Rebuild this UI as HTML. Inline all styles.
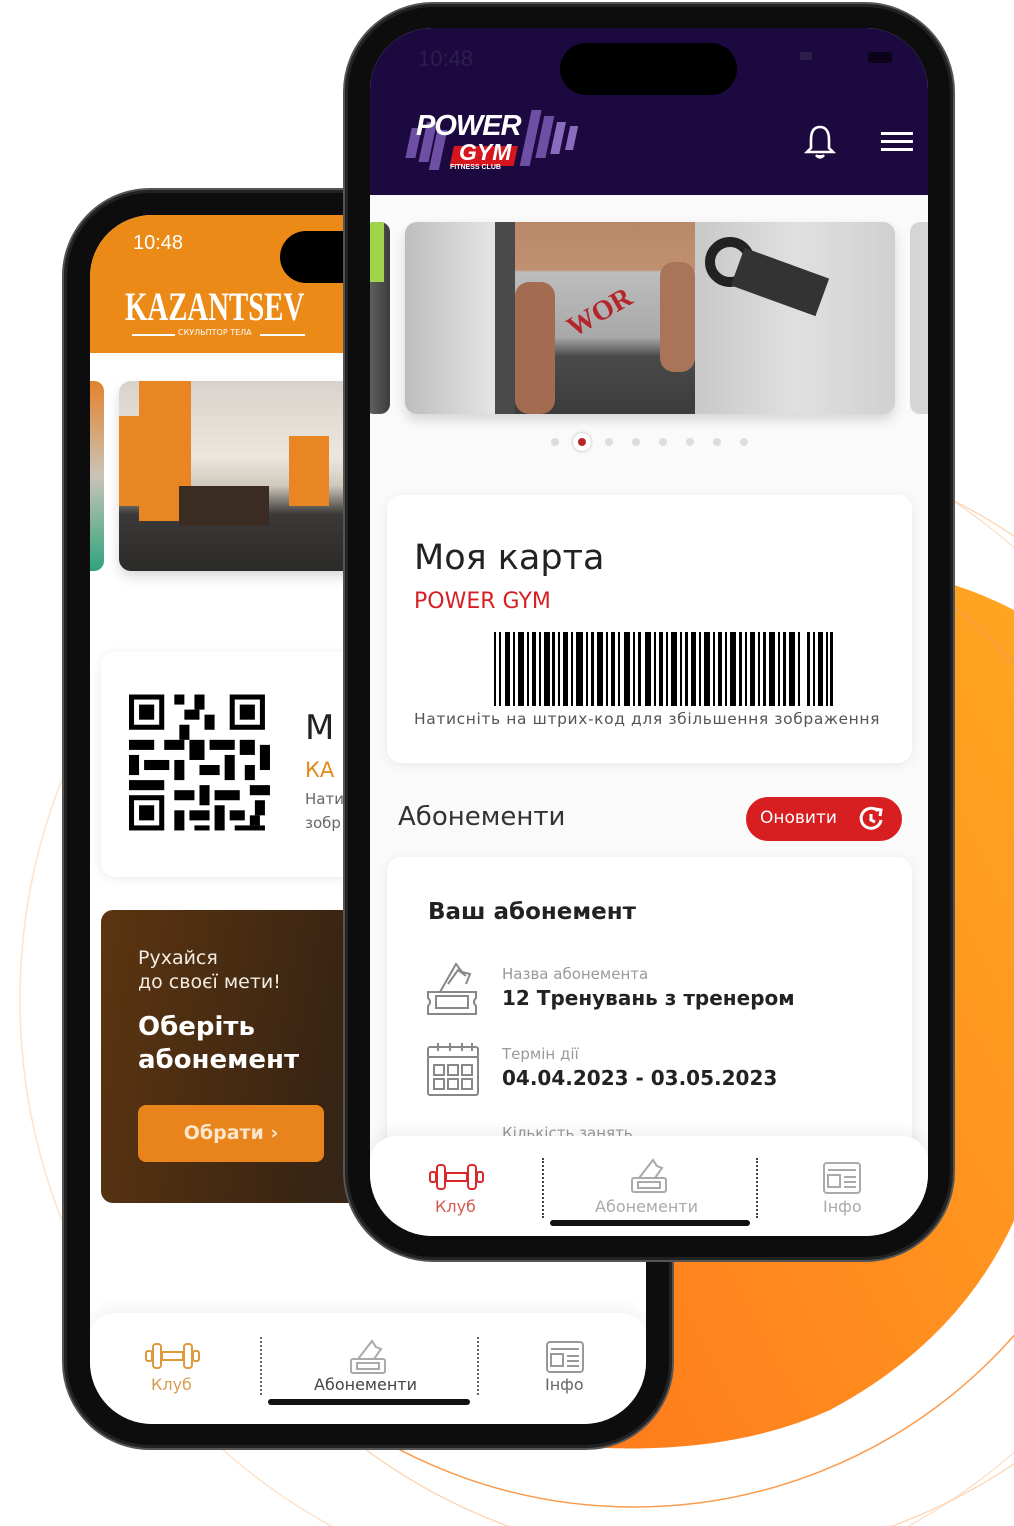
<!DOCTYPE html>
<html><head><meta charset="utf-8">
<style>
*{margin:0;padding:0;box-sizing:border-box}
html,body{width:1014px;height:1526px;overflow:hidden}
body{background:#fff;position:relative;font-family:"DejaVu Sans","Liberation Sans",sans-serif}
.abs{position:absolute}
.t{position:absolute;white-space:nowrap}
</style></head><body>

<svg class="abs" style="left:0;top:0" width="1014" height="1526">
<defs><linearGradient id="og" x1="0" y1="1" x2="1" y2="0"><stop offset="0" stop-color="#ff7a1c"/><stop offset="1" stop-color="#ffa722"/></linearGradient></defs>
<path d="M700 580 Q880 540 1014 610 L1030 610 L1030 1180 Q980 1330 830 1410 Q720 1460 560 1445 L560 580 Z" fill="url(#og)"/>
<circle cx="620" cy="1000" r="600" fill="none" stroke="#fde2cc" stroke-width="1.5"/>
<circle cx="634" cy="1000" r="507" fill="none" stroke="#fb9a4a" stroke-width="1.5"/>
<circle cx="700" cy="1000" r="560" fill="none" stroke="#fdd0a8" stroke-width="1.2"/>
</svg>

<!-- BACK PHONE -->
<div class="abs" style="left:62px;top:188px;width:612px;height:1262px;border-radius:88px;background:#0d0d0d;border:2px solid #555;box-shadow:inset 0 0 0 3px #222"></div>
<div class="abs" style="left:90px;top:215px;width:556px;height:1209px;border-radius:62px;background:#fff;overflow:hidden">
  <div class="abs" style="left:0;top:0;width:556px;height:138px;background:#ec8a17"></div>
  <div class="t" style="left:43px;top:17px;color:#fff;font-size:20px;font-family:'Liberation Sans',sans-serif">10:48</div>
  <div class="abs" style="left:190px;top:16px;width:180px;height:52px;border-radius:26px;background:#000"></div>
  <div class="t" style="left:35px;top:68px;color:#fff;font-size:40px;font-weight:bold;font-family:'Liberation Serif',serif;transform:scaleX(0.72);transform-origin:left">KAZANTSEV</div>
  <div class="abs" style="left:42px;top:119px;width:43px;height:2px;background:#fff"></div>
  <div class="t" style="left:88px;top:113px;color:#fff;font-size:8px">СКУЛЬПТОР ТЕЛА</div>
  <div class="abs" style="left:170px;top:119px;width:45px;height:2px;background:#fff"></div>
  <div class="abs" style="left:-10px;top:166px;width:24px;height:190px;border-radius:10px;background:linear-gradient(#e4822c,#c9c4b8 50%,#2ea37b)"></div>
  <div class="abs" style="left:29px;top:166px;width:300px;height:190px;border-radius:12px;overflow:hidden;background:linear-gradient(#d7d2cb 0%,#ece7de 40%,#cfc8bc 55%,#3c3a38 70%,#2b2a29 100%);box-shadow:0 6px 12px rgba(0,0,0,.15)">
    <div class="abs" style="left:20px;top:0;width:52px;height:140px;background:#e98624"></div>
    <div class="abs" style="left:170px;top:55px;width:40px;height:70px;background:#e98624"></div>
    <div class="abs" style="left:0;top:35px;width:30px;height:90px;background:#e98624"></div>
    <div class="abs" style="left:60px;top:105px;width:90px;height:40px;background:#3a2c22"></div>
  </div>
  <div class="abs" style="left:11px;top:437px;width:560px;height:225px;border-radius:14px;background:#fff;box-shadow:0 2px 12px rgba(0,0,0,.08)"></div>
  <svg class="abs" style="left:39px;top:479px" width="146" height="142" viewBox="0 0 29 28">
    <g fill="#000">
      <rect x="0" y="0" width="7" height="7"/><rect x="1" y="1" width="5" height="5" fill="#fff"/><rect x="2" y="2" width="3" height="3"/>
      <rect x="20" y="0" width="7" height="7"/><rect x="21" y="1" width="5" height="5" fill="#fff"/><rect x="22" y="2" width="3" height="3"/>
      <rect x="0" y="20" width="7" height="7"/><rect x="1" y="21" width="5" height="5" fill="#fff"/><rect x="2" y="22" width="3" height="3"/>
      <rect x="9" y="0" width="2" height="2"/><rect x="13" y="0" width="2" height="3"/><rect x="11" y="3" width="3" height="2"/><rect x="15" y="4" width="2" height="3"/><rect x="10" y="6" width="2" height="3"/>
      <rect x="0" y="9" width="5" height="2"/><rect x="0" y="12" width="2" height="4"/><rect x="3" y="13" width="5" height="2"/><rect x="7" y="9" width="4" height="2"/><rect x="12" y="9" width="3" height="4"/><rect x="16" y="9" width="5" height="2"/><rect x="22" y="9" width="3" height="3"/><rect x="26" y="10" width="2" height="5"/>
      <rect x="9" y="13" width="2" height="4"/><rect x="14" y="14" width="4" height="2"/><rect x="19" y="12" width="2" height="5"/><rect x="23" y="14" width="2" height="3"/><rect x="0" y="17" width="7" height="2"/>
      <rect x="9" y="19" width="4" height="2"/><rect x="14" y="18" width="2" height="4"/><rect x="17" y="19" width="5" height="2"/><rect x="24" y="18" width="4" height="2"/><rect x="9" y="23" width="2" height="4"/><rect x="12" y="23" width="4" height="2"/><rect x="17" y="22" width="2" height="5"/><rect x="20" y="23" width="3" height="2"/><rect x="25" y="21" width="2" height="3"/><rect x="13" y="26" width="3" height="1"/><rect x="21" y="26" width="6" height="1"/><rect x="24" y="24" width="2" height="2"/>
    </g>
  </svg>
  <div class="t" style="left:215px;top:493px;font-size:34px;color:#222">М</div>
  <div class="t" style="left:215px;top:543px;font-size:21px;color:#e08a20">КА</div>
  <div class="t" style="left:215px;top:575px;font-size:15px;color:#666">Нати</div>
  <div class="t" style="left:215px;top:599px;font-size:15px;color:#666">зобр</div>
  <div class="abs" style="left:11px;top:695px;width:560px;height:293px;border-radius:12px;background:linear-gradient(100deg,#5c3510 0%,#3a2513 40%,#2a2420 70%,#555 100%)"></div>
  <div class="t" style="left:48px;top:732px;font-size:19px;color:#f3ece4">Рухайся</div>
  <div class="t" style="left:48px;top:756px;font-size:19px;color:#f3ece4">до своєї мети!</div>
  <div class="t" style="left:48px;top:797px;font-size:26px;font-weight:bold;color:#fff">Оберіть</div>
  <div class="t" style="left:48px;top:830px;font-size:26px;font-weight:bold;color:#fff">абонемент</div>
  <div class="abs" style="left:48px;top:890px;width:186px;height:57px;border-radius:8px;background:#e8841b;color:#fde6cc;font-size:19px;font-weight:bold;text-align:center;line-height:57px">Обрати ›</div>
  <div class="abs" style="left:0;top:1098px;width:556px;height:111px;background:#fff;border-radius:24px 24px 0 0;box-shadow:0 -6px 14px rgba(0,0,0,.05)"></div>
  <svg class="abs" style="left:55px;top:1126px" width="55" height="30" viewBox="0 0 55 30" fill="none" stroke="#dd9a3a" stroke-width="2"><rect x="1" y="10" width="6" height="10" rx="2"/><rect x="8" y="3" width="8" height="24" rx="3"/><rect x="39" y="3" width="8" height="24" rx="3"/><rect x="48" y="10" width="6" height="10" rx="2"/><rect x="17" y="11" width="21" height="8"/></svg>
  <div class="t" style="left:61px;top:1160px;font-size:16px;color:#d99b52">Клуб</div>
  <div class="abs" style="left:170px;top:1122px;height:58px;border-left:2px dotted #666"></div>
  <svg class="abs" style="left:258px;top:1122px" width="40" height="38" viewBox="0 0 40 38" fill="none" stroke="#aaa" stroke-width="2"><path d="M10 22 L24 4 L28 10 L33 12 L26 22"/><rect x="3" y="22" width="34" height="14" rx="2"/><rect x="9" y="26" width="22" height="6"/></svg>
  <div class="t" style="left:224px;top:1160px;font-size:16px;color:#444">Абонементи</div>
  <div class="abs" style="left:387px;top:1122px;height:58px;border-left:2px dotted #666"></div>
  <svg class="abs" style="left:456px;top:1126px" width="38" height="32" viewBox="0 0 38 32" fill="none" stroke="#999" stroke-width="2"><rect x="1" y="1" width="36" height="30" rx="3"/><line x1="5" y1="8" x2="33" y2="8"/><rect x="5" y="13" width="12" height="12"/><line x1="21" y1="15" x2="33" y2="15"/><line x1="21" y1="20" x2="33" y2="20"/><line x1="21" y1="25" x2="33" y2="25"/></svg>
  <div class="t" style="left:455px;top:1160px;font-size:16px;color:#666">Інфо</div>
  <div class="abs" style="left:178px;top:1184px;width:202px;height:6px;border-radius:3px;background:#111"></div>
</div>

<!-- FRONT PHONE -->
<div class="abs" style="left:343px;top:2px;width:612px;height:1260px;border-radius:90px;background:#0d0d0d;border:2px solid #555;box-shadow:inset 0 0 0 3px #222"></div>
<div class="abs" style="left:370px;top:28px;width:558px;height:1208px;border-radius:62px;background:#fafafa;overflow:hidden">
  <div class="abs" style="left:0;top:0;width:558px;height:167px;background:#1c0940"></div>
  <div class="t" style="left:48px;top:18px;font-size:22px;color:#2d1e4d;font-family:'Liberation Sans',sans-serif">10:48</div>
  <div class="abs" style="left:190px;top:15px;width:177px;height:52px;border-radius:26px;background:#000"></div>
  <div class="abs" style="left:430px;top:24px;width:12px;height:8px;background:#2d1e4d"></div>
  <div class="abs" style="left:498px;top:24px;width:24px;height:11px;border-radius:3px;background:#0a0318"></div>
  <svg class="abs" style="left:28px;top:80px" width="180" height="68" viewBox="0 0 180 68">
    <g fill="#6d4fa3" transform="skewX(-12)">
      <rect x="18" y="20" width="10" height="30"/><rect x="32" y="14" width="10" height="40"/><rect x="44" y="22" width="10" height="40"/>
      <rect x="134" y="2" width="10" height="56"/><rect x="148" y="8" width="10" height="42"/><rect x="162" y="14" width="9" height="32" fill="#8a6bbd"/><rect x="176" y="18" width="8" height="24" fill="#8a6bbd"/>
    </g>
    <rect x="64" y="38" width="64" height="20" fill="#d5161e" transform="skewX(-12)"/>
  </svg>
  <div class="t" style="left:46px;top:82px;font-size:29px;font-weight:bold;font-style:italic;color:#fff;font-family:'Liberation Sans',sans-serif;letter-spacing:-1px">POWER</div>
  <div class="t" style="left:89px;top:111px;font-size:23px;font-weight:bold;font-style:italic;color:#fff;font-family:'Liberation Sans',sans-serif">GYM</div>
  <div class="t" style="left:80px;top:136px;font-size:7px;font-weight:bold;color:#fff;font-family:'Liberation Sans',sans-serif">FITNESS CLUB</div>
  <svg class="abs" style="left:434px;top:96px" width="32" height="36" viewBox="0 0 32 36" fill="none" stroke="#fff" stroke-width="2.6"><path d="M16 3 C8 3 7 11 7 16 L7 24 L3 28 L29 28 L25 24 L25 16 C25 11 24 3 16 3Z"/><path d="M12 31 Q16 36 20 31" fill="#fff"/></svg>
  <div class="abs" style="left:511px;top:104px;width:32px;height:3px;background:#fff"></div>
  <div class="abs" style="left:511px;top:112px;width:32px;height:3px;background:#fff"></div>
  <div class="abs" style="left:511px;top:120px;width:32px;height:3px;background:#fff"></div>
  <div class="abs" style="left:-6px;top:194px;width:26px;height:192px;border-radius:10px;background:linear-gradient(90deg,#6a6a6a,#3c3c3c);overflow:hidden"><div class="abs" style="left:6px;top:0;width:14px;height:60px;background:#9dd44a"></div></div>
  <div class="abs" style="left:35px;top:194px;width:490px;height:192px;border-radius:12px;overflow:hidden;background:linear-gradient(90deg,#bdbdbd,#e8e8e8 20%,#c9c9c9 60%,#e0e0e0 80%,#d0d0d0);box-shadow:0 6px 12px rgba(0,0,0,.15)">
    <div class="abs" style="left:90px;top:0;width:40px;height:192px;background:#4a4a4a"></div>
    <div class="abs" style="left:110px;top:0;width:180px;height:192px;background:linear-gradient(180deg,#b88868 0%,#c09070 25%,#bdbdbd 26%,#a8a8a8 60%,#4a4a4a 70%,#3c3c3c)"></div>
    <div class="abs" style="left:110px;top:60px;width:40px;height:132px;background:#a36b4f;border-radius:14px"></div>
    <div class="abs" style="left:255px;top:40px;width:35px;height:110px;background:#aa7458;border-radius:14px"></div>
    <div class="t" style="left:160px;top:75px;font-size:28px;font-weight:bold;color:#b3262b;transform:rotate(-30deg);font-family:'Liberation Serif',serif">WOR</div>
    <div class="abs" style="left:300px;top:15px;width:50px;height:50px;border-radius:50%;border:10px solid #222"></div>
    <div class="abs" style="left:330px;top:40px;width:90px;height:40px;background:#333;transform:rotate(20deg)"></div>
  </div>
  <div class="abs" style="left:540px;top:194px;width:30px;height:192px;border-radius:10px;background:#d5d5d5"></div>
  <div class="abs" style="left:181px;top:410px;width:8px;height:8px;border-radius:50%;background:#ddd"></div>
  <div class="abs" style="left:203px;top:405px;width:18px;height:18px;border-radius:50%;background:#fff;box-shadow:0 0 3px rgba(0,0,0,.3)"><div class="abs" style="left:5px;top:5px;width:8px;height:8px;border-radius:50%;background:#b3262b"></div></div>
  <div class="abs" style="left:235px;top:410px;width:8px;height:8px;border-radius:50%;background:#ddd"></div>
  <div class="abs" style="left:262px;top:410px;width:8px;height:8px;border-radius:50%;background:#ddd"></div>
  <div class="abs" style="left:289px;top:410px;width:8px;height:8px;border-radius:50%;background:#ddd"></div>
  <div class="abs" style="left:316px;top:410px;width:8px;height:8px;border-radius:50%;background:#ddd"></div>
  <div class="abs" style="left:343px;top:410px;width:8px;height:8px;border-radius:50%;background:#ddd"></div>
  <div class="abs" style="left:370px;top:410px;width:8px;height:8px;border-radius:50%;background:#ddd"></div>
  <div class="abs" style="left:17px;top:467px;width:525px;height:268px;border-radius:14px;background:#fff;box-shadow:0 2px 12px rgba(0,0,0,.07)"></div>
  <div class="t" style="left:44px;top:510px;font-size:35px;color:#222">Моя карта</div>
  <div class="t" style="left:44px;top:561px;font-size:22px;color:#d62024">POWER GYM</div>
  <svg class="abs" style="left:124px;top:604px" width="339" height="74" viewBox="0 0 339 74">
    <g fill="#000">
      <rect x="0" y="0" width="2" height="74"/><rect x="5" y="0" width="2" height="74"/><rect x="11" y="0" width="5" height="74"/><rect x="19" y="0" width="2" height="74"/><rect x="24" y="0" width="6" height="74"/><rect x="33" y="0" width="2" height="74"/><rect x="38" y="0" width="4" height="74"/><rect x="45" y="0" width="2" height="74"/><rect x="50" y="0" width="6" height="74"/><rect x="58" y="0" width="3" height="74"/><rect x="64" y="0" width="2" height="74"/><rect x="69" y="0" width="5" height="74"/><rect x="77" y="0" width="2" height="74"/><rect x="82" y="0" width="7" height="74"/><rect x="92" y="0" width="2" height="74"/><rect x="97" y="0" width="3" height="74"/><rect x="103" y="0" width="6" height="74"/><rect x="112" y="0" width="2" height="74"/><rect x="117" y="0" width="4" height="74"/><rect x="124" y="0" width="2" height="74"/><rect x="130" y="0" width="6" height="74"/><rect x="139" y="0" width="2" height="74"/><rect x="144" y="0" width="3" height="74"/><rect x="151" y="0" width="6" height="74"/><rect x="160" y="0" width="2" height="74"/><rect x="165" y="0" width="4" height="74"/><rect x="172" y="0" width="2" height="74"/><rect x="177" y="0" width="6" height="74"/><rect x="186" y="0" width="2" height="74"/><rect x="191" y="0" width="3" height="74"/><rect x="197" y="0" width="5" height="74"/><rect x="205" y="0" width="2" height="74"/><rect x="210" y="0" width="6" height="74"/><rect x="219" y="0" width="2" height="74"/><rect x="224" y="0" width="4" height="74"/><rect x="231" y="0" width="2" height="74"/><rect x="236" y="0" width="6" height="74"/><rect x="245" y="0" width="3" height="74"/><rect x="251" y="0" width="2" height="74"/><rect x="256" y="0" width="5" height="74"/><rect x="264" y="0" width="2" height="74"/><rect x="269" y="0" width="3" height="74"/><rect x="275" y="0" width="6" height="74"/><rect x="284" y="0" width="2" height="74"/><rect x="289" y="0" width="3" height="74"/><rect x="295" y="0" width="6" height="74"/><rect x="304" y="0" width="2" height="74"/><rect x="313" y="0" width="3" height="74"/><rect x="319" y="0" width="2" height="74"/><rect x="324" y="0" width="5" height="74"/><rect x="332" y="0" width="2" height="74"/><rect x="336" y="0" width="3" height="74"/>
    </g>
  </svg>
  <div class="t" style="left:44px;top:682px;font-size:15.5px;color:#555;letter-spacing:0.6px">Натисніть на штрих-код для збільшення зображення</div>
  <div class="t" style="left:28px;top:774px;font-size:26px;color:#333">Абонементи</div>
  <div class="abs" style="left:376px;top:769px;width:156px;height:44px;border-radius:22px;background:#d71e20"></div>
  <div class="t" style="left:390px;top:780px;font-size:17px;color:#fff">Оновити</div>
  <svg class="abs" style="left:488px;top:778px" width="28" height="26" viewBox="0 0 28 26" fill="none" stroke="#fff" stroke-width="3"><path d="M20 5 A10 10 0 1 0 23 14"/><path d="M17 3 L23 4 L22 10" /><path d="M13 8 L13 14 L17 16"/></svg>
  <div class="abs" style="left:17px;top:829px;width:525px;height:360px;border-radius:14px;background:#fff;box-shadow:0 2px 12px rgba(0,0,0,.07)"></div>
  <div class="t" style="left:58px;top:871px;font-size:23px;font-weight:bold;color:#222">Ваш абонемент</div>
  <svg class="abs" style="left:56px;top:932px" width="56" height="56" viewBox="0 0 56 56" fill="none" stroke="#888" stroke-width="2"><path d="M14 32 L30 4 L36 12 L44 14 L40 24"/><path d="M22 24 L32 10 L40 16"/><path d="M2 32 L50 32 L50 38 Q46 42 50 46 L50 54 L2 54 L2 46 Q6 42 2 38Z"/><rect x="10" y="36" width="32" height="12"/></svg>
  <div class="t" style="left:132px;top:937px;font-size:15px;color:#999">Назва абонемента</div>
  <div class="t" style="left:132px;top:958px;font-size:20px;font-weight:bold;color:#222">12 Тренувань з тренером</div>
  <svg class="abs" style="left:56px;top:1013px" width="56" height="56" viewBox="0 0 56 56" fill="none" stroke="#888" stroke-width="2"><rect x="2" y="6" width="50" height="48" rx="2"/><line x1="2" y1="16" x2="52" y2="16"/><line x1="12" y1="2" x2="12" y2="10"/><line x1="24" y1="2" x2="24" y2="10"/><line x1="36" y1="2" x2="36" y2="10"/><line x1="46" y1="2" x2="46" y2="10"/><rect x="8" y="24" width="10" height="10"/><rect x="22" y="24" width="10" height="10"/><rect x="36" y="24" width="10" height="10"/><rect x="8" y="38" width="10" height="10"/><rect x="22" y="38" width="10" height="10"/><rect x="36" y="38" width="10" height="10"/></svg>
  <div class="t" style="left:132px;top:1017px;font-size:15px;color:#999">Термін дії</div>
  <div class="t" style="left:132px;top:1038px;font-size:20px;font-weight:bold;color:#222">04.04.2023 - 03.05.2023</div>
  <div class="t" style="left:132px;top:1096px;font-size:15px;color:#999">Кількість занять</div>
  <div class="abs" style="left:0;top:1108px;width:558px;height:100px;background:#fff;border-radius:26px 26px 0 0;box-shadow:0 -6px 14px rgba(0,0,0,.06)"></div>
  <svg class="abs" style="left:59px;top:1134px" width="55" height="30" viewBox="0 0 55 30" fill="none" stroke="#d82a2a" stroke-width="2"><rect x="1" y="10" width="6" height="10" rx="2"/><rect x="8" y="3" width="8" height="24" rx="3"/><rect x="39" y="3" width="8" height="24" rx="3"/><rect x="48" y="10" width="6" height="10" rx="2"/><rect x="17" y="11" width="21" height="8"/></svg>
  <div class="t" style="left:65px;top:1169px;font-size:16px;color:#d45a50">Клуб</div>
  <div class="abs" style="left:172px;top:1130px;height:60px;border-left:2px dotted #444"></div>
  <svg class="abs" style="left:259px;top:1128px" width="40" height="38" viewBox="0 0 40 38" fill="none" stroke="#aaa" stroke-width="2"><path d="M10 22 L24 4 L28 10 L33 12 L26 22"/><rect x="3" y="22" width="34" height="14" rx="2"/><rect x="9" y="26" width="22" height="6"/></svg>
  <div class="t" style="left:225px;top:1169px;font-size:16px;color:#aaa">Абонементи</div>
  <div class="abs" style="left:386px;top:1130px;height:60px;border-left:2px dotted #444"></div>
  <svg class="abs" style="left:453px;top:1134px" width="38" height="32" viewBox="0 0 38 32" fill="none" stroke="#aaa" stroke-width="2"><rect x="1" y="1" width="36" height="30" rx="3"/><line x1="5" y1="8" x2="33" y2="8"/><rect x="5" y="13" width="12" height="12"/><line x1="21" y1="15" x2="33" y2="15"/><line x1="21" y1="20" x2="33" y2="20"/><line x1="21" y1="25" x2="33" y2="25"/></svg>
  <div class="t" style="left:453px;top:1169px;font-size:16px;color:#aaa">Інфо</div>
  <div class="abs" style="left:180px;top:1192px;width:200px;height:6px;border-radius:3px;background:#111"></div>
</div>
</body></html>
